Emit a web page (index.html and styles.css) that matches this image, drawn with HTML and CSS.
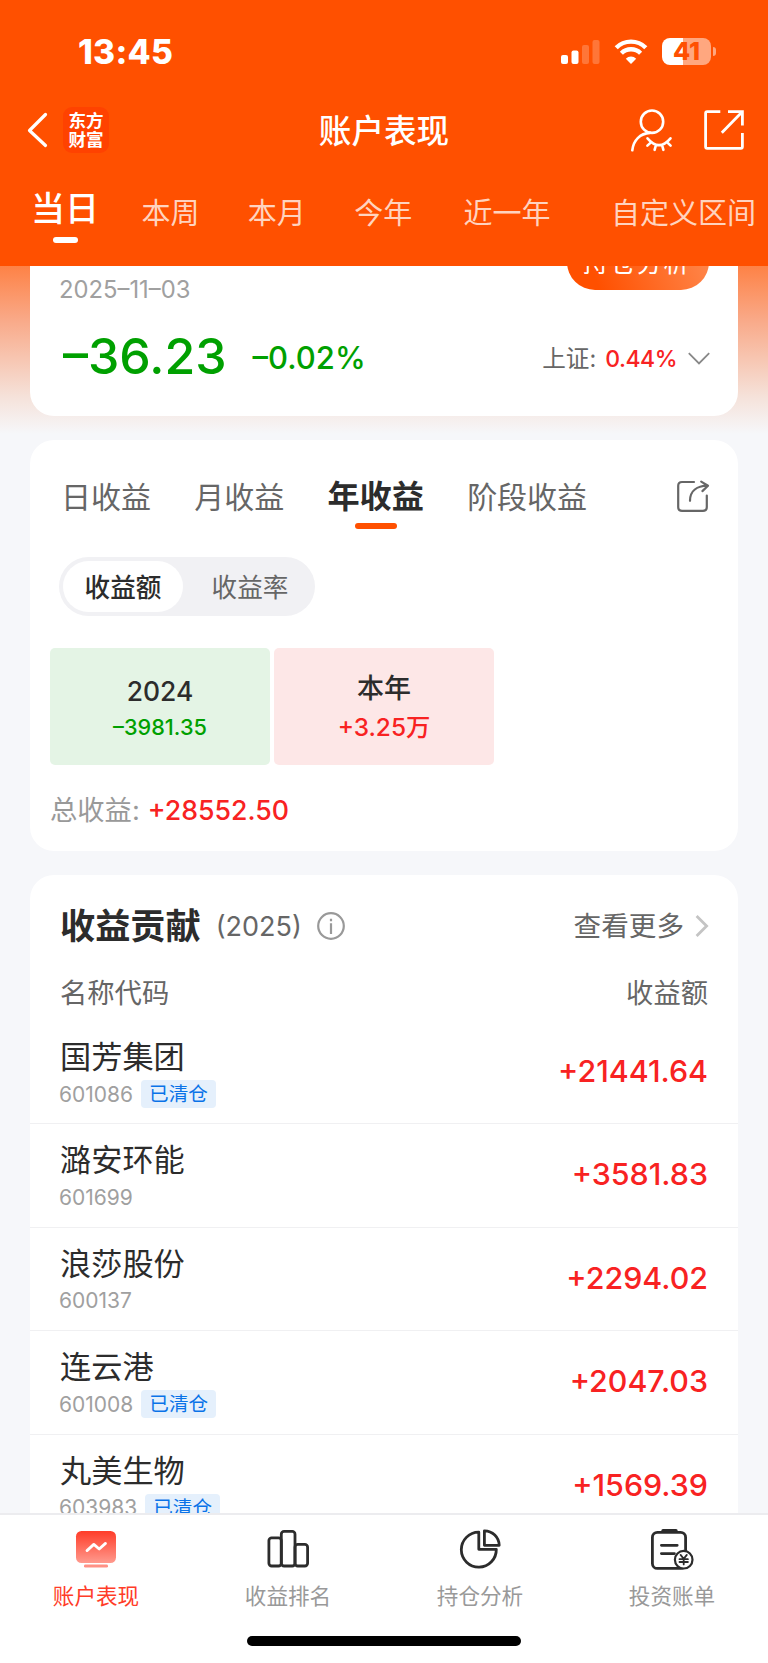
FILE: index.html
```html
<!DOCTYPE html>
<html lang="zh-CN">
<head>
  <meta charset="UTF-8">
  <meta name="viewport" content="width=device-width, initial-scale=1.0">
  <title>账户表现</title>
  <link rel="stylesheet" href="styles.css">
</head>
<body>
  <div class="app">
    <header class="header">
      <div class="status-bar">
        <span class="time">13:45</span>
        <div class="status-icons">
          <svg width="39" height="26" viewBox="0 0 39 26" fill="#fff">
            <rect x="0" y="16" width="7" height="9" rx="2"/>
            <rect x="10.5" y="11.5" width="7" height="13.5" rx="2"/>
            <rect x="21" y="6" width="7" height="19" rx="2" opacity=".22"/>
            <rect x="31.5" y="1" width="7" height="24" rx="2" opacity=".22"/>
          </svg>
          <svg class="wifi" width="34" height="26" viewBox="0 0 34 26" fill="none" stroke="#fff" stroke-width="4.4">
            <path d="M2.2 8.7a21 21 0 0 1 29.6 0"/>
            <path d="M7.4 14.2a13.6 13.6 0 0 1 19.2 0"/>
            <path d="M17 25l-5.2-5.3a7.4 7.4 0 0 1 10.4 0z" fill="#fff" stroke="none"/>
          </svg>
          <div class="battery"><span>41</span></div>
        </div>
      </div>

      <div class="nav-bar">
        <div class="nav-left">
          <svg width="22" height="36" viewBox="0 0 22 36" fill="none" stroke="#fff" stroke-width="3.2" stroke-linecap="round" stroke-linejoin="round">
            <path d="M18.5 2.5L2.5 18.5l16 15"/>
          </svg>
          <div class="logo">东方<br>财富</div>
        </div>
        <h1 class="nav-title">账户表现</h1>
        <div class="nav-right">
          <svg width="48" height="48" viewBox="0 0 48 48" fill="none" stroke="#fff" stroke-width="2.6" stroke-linecap="round">
            <circle cx="26" cy="15.7" r="11.2"/>
            <path d="M6.3 44.3C7.3 34.5 14 27.4 24 26.9"/>
            <path d="M21.5 32.3Q33 45.9 44.5 32.3M25 36.4l-3.6 3.2M30 38.8l-1.4 5M36 38.8l1.4 5M41.2 36.4l3.4 3.2"/>
          </svg>
          <svg width="48" height="48" viewBox="0 0 48 48" fill="none" stroke="#fff" stroke-width="2.8">
            <path d="M20.3 5.6H7.2Q5.6 5.6 5.6 7.2V40.8Q5.6 42.4 7.2 42.4H40.8Q42.4 42.4 42.4 40.8V27"/>
            <path d="M28 5.6H42.4V19.6M42 6L21.8 26.8"/>
          </svg>
        </div>
      </div>

      <nav class="range-tabs">
        <a class="active">当日</a>
        <a>本周</a>
        <a>本月</a>
        <a>今年</a>
        <a class="year">近一年</a>
        <a class="custom">自定义区间</a>
      </nav>
    </header>

    <main class="content">
      <section class="card summary">
        <div class="summary-top">
          <span class="date">2025–11–03</span>
          <a class="pill">持仓分析</a>
        </div>
        <div class="summary-values">
          <span class="profit">–36.23</span>
          <span class="rate">–0.02%</span>
          <div class="index">
            <span>上证:</span>
            <b>0.44%</b>
            <svg width="22" height="14" viewBox="0 0 22 14" fill="none" stroke="#888" stroke-width="1.8">
              <path d="M.8 1.2L11 11.4 21.2 1.2"/>
            </svg>
          </div>
        </div>
      </section>

      <section class="card period">
        <div class="period-tabs">
          <a>日收益</a>
          <a>月收益</a>
          <a class="active">年收益</a>
          <a>阶段收益</a>
          <svg width="40" height="40" viewBox="0 0 40 40" fill="none" stroke="#666" stroke-width="2.2" stroke-linecap="round" stroke-linejoin="round">
            <path d="M22 6H10Q6.2 6 6.2 9.8V31Q6.2 34.8 10 34.8H31Q34.8 34.8 34.8 31V19.5"/>
            <path d="M18 24.8C18 15 25 9.9 35.6 9.7M29.2 5.6L36 9.7l-5.6 5.4"/>
          </svg>
        </div>
        <div class="switch">
          <span class="on">收益额</span>
          <span>收益率</span>
        </div>
        <div class="years">
          <div class="year-box loss">
            <strong>2024</strong>
            <span>–3981.35</span>
          </div>
          <div class="year-box gain">
            <strong>本年</strong>
            <span>+3.25万</span>
          </div>
        </div>
        <div class="total"><span>总收益:</span><b>+28552.50</b></div>
      </section>

      <section class="card contrib">
        <div class="contrib-head">
          <h2>收益贡献</h2>
          <span class="contrib-year">(2025)</span>
          <svg width="28" height="28" viewBox="0 0 28 28" fill="none" stroke="#999" stroke-width="2.2">
            <circle cx="14" cy="14" r="12.8"/>
            <path d="M14 11.2V22M14 6.8v2.4"/>
          </svg>
          <a class="more">查看更多
            <svg width="14" height="22" viewBox="0 0 14 22" fill="none" stroke="#c4c4c4" stroke-width="2.8">
              <path d="M1.6 1l10 10-10 10"/>
            </svg>
          </a>
        </div>
        <div class="contrib-cols"><span>名称代码</span><span>收益额</span></div>

        <div class="stock">
          <div>
            <div class="name">国芳集团</div>
            <div class="code">601086<em>已清仓</em></div>
          </div>
          <span class="amount">+21441.64</span>
        </div>
        <div class="stock">
          <div>
            <div class="name">潞安环能</div>
            <div class="code">601699</div>
          </div>
          <span class="amount">+3581.83</span>
        </div>
        <div class="stock">
          <div>
            <div class="name">浪莎股份</div>
            <div class="code">600137</div>
          </div>
          <span class="amount">+2294.02</span>
        </div>
        <div class="stock">
          <div>
            <div class="name">连云港</div>
            <div class="code">601008<em>已清仓</em></div>
          </div>
          <span class="amount">+2047.03</span>
        </div>
        <div class="stock">
          <div>
            <div class="name">丸美生物</div>
            <div class="code">603983<em>已清仓</em></div>
          </div>
          <span class="amount">+1569.39</span>
        </div>
      </section>
    </main>

    <footer class="footer">
      <div class="tab-bar">
        <a class="active">
          <svg width="48" height="48" viewBox="0 0 48 48">
            <defs>
              <linearGradient id="screen" x1="0" y1="0" x2="0" y2="1">
                <stop offset="0" stop-color="#ff3c28"/>
                <stop offset="1" stop-color="#ff9a8e"/>
              </linearGradient>
            </defs>
            <rect x="4" y="6" width="40" height="32" rx="5.5" fill="url(#screen)"/>
            <rect x="12" y="39.6" width="24" height="3" rx="1.4" fill="#ff9185"/>
            <path d="M15 25.6l6.8-6.2 5.4 4.6 6.3-5.6" fill="none" stroke="#fff" stroke-width="2.8" stroke-linecap="round" stroke-linejoin="round"/>
          </svg>
          账户表现
        </a>
        <a>
          <svg width="48" height="48" viewBox="0 0 48 48" fill="none" stroke="#2c2c2c" stroke-width="2.8">
            <rect x="4.9" y="12.8" width="12.4" height="28.2" rx="2.8"/>
            <rect x="17.3" y="6.4" width="13.7" height="34.6" rx="2.8"/>
            <rect x="31" y="19.4" width="12.6" height="21.6" rx="2.8"/>
          </svg>
          收益排名
        </a>
        <a>
          <svg width="48" height="48" viewBox="0 0 48 48" fill="none" stroke="#2c2c2c" stroke-width="2.8" stroke-linejoin="round">
            <path d="M22.8 7.2V24.3H40.3A17.5 17.5 0 1 1 22.8 7.2z"/>
            <path d="M28.4 5.8V20.3H43.2A14.7 14.7 0 0 0 28.4 5.8z"/>
          </svg>
          持仓分析
        </a>
        <a>
          <svg width="48" height="48" viewBox="0 0 48 48" fill="none" stroke="#2c2c2c" stroke-width="2.8" stroke-linecap="round">
            <rect x="4.4" y="7.4" width="33.2" height="36" rx="5"/>
            <path d="M15 5.8h13" stroke-width="3.4"/>
            <path d="M13.4 20.3h15.8M13.4 28.6h13"/>
            <circle cx="35.7" cy="34.7" r="8.8" fill="#fff" stroke-width="2.2"/>
            <path d="M32.6 29.9l3.1 4 3.1-4M35.7 34v5.4M31.5 34.2h8.4M31.5 37h8.4" stroke-width="1.8"/>
          </svg>
          投资账单
        </a>
      </div>
      <div class="home-indicator"></div>
    </footer>
  </div>
</body>
</html>
```

FILE: styles.css
```css
* {
  box-sizing: border-box;
}

body {
  margin: 0;
  font-family: Inter, "Noto Sans CJK SC", sans-serif;
  color: #2c2c2c;
  background-color: #f6f7fa;
}

h1, h2 {
  margin: 0;
}

b, em {
  font-style: normal;
  font-weight: 500;
}

svg {
  display: block;
  flex-shrink: 0;
}

.app {
  display: flex;
  flex-direction: column;
  width: 768px;
  height: 1663px;
  overflow: hidden;
}

/* header */
.header {
  flex: none;
  height: 266px;
  background-color: #ff5000;
  color: #fff;
}

.status-bar {
  display: flex;
  justify-content: space-between;
  align-items: center;
  height: 103px;
  padding: 0 52px 0 78px;
}

.time {
  font-size: 33.6px;
  font-weight: 800;
  letter-spacing: .3px;
}

.status-icons {
  display: flex;
  align-items: center;
}

.wifi {
  margin: 0 14px;
}

.battery {
  position: relative;
  width: 49px;
  height: 27px;
  margin-right: 5px;
  border-radius: 8px;
  background: linear-gradient(90deg, #fff 42%, #ffa77f 42%);
  color: #ff5000;
  font-size: 25px;
  font-weight: 800;
  line-height: 27px;
  text-align: center;
}

.battery::after {
  content: "";
  position: absolute;
  right: -5px;
  top: 9px;
  width: 3px;
  height: 9px;
  border-radius: 0 4px 4px 0;
  background-color: #ffa77f;
}

.nav-bar {
  display: grid;
  grid-template-columns: 1fr auto 1fr;
  align-items: center;
  height: 54px;
  padding: 0 20px;
}

.nav-left {
  display: flex;
  align-items: center;
  gap: 14px;
  padding-left: 7px;
}

.logo {
  width: 46px;
  height: 46px;
  padding-top: 4px;
  border-radius: 9px;
  background-color: #ff4200;
  font-size: 17.6px;
  font-weight: 700;
  line-height: 19.4px;
  text-align: center;
}

.nav-title {
  padding-top: 2px;
  font-size: 32.6px;
  font-weight: 500;
  line-height: 52px;
}

.nav-right {
  display: flex;
  justify-content: flex-end;
  gap: 26px;
}

.range-tabs {
  display: flex;
  height: 109px;
  padding-left: 31px;
  gap: 48.4px;
  font-size: 29px;
  line-height: 114px;
  white-space: nowrap;
}

.range-tabs a {
  color: #ffd3bf;
}

.range-tabs .active {
  position: relative;
  margin-right: -6px;
  color: #fff;
  font-size: 34px;
  font-weight: 500;
  line-height: 104px;
}

.range-tabs .active::after {
  content: "";
  position: absolute;
  left: 22px;
  top: 80px;
  width: 25px;
  height: 6px;
  border-radius: 3px;
  background-color: #fff;
}

.range-tabs .year {
  margin-left: 3px;
}

.range-tabs .custom {
  margin-left: 12px;
}

/* scroll area */
.content {
  flex: 1;
  min-height: 0;
  overflow: hidden;
  padding: 0 30px;
  background: linear-gradient(#fe8246, #f9a988 32%, #f5e2da 78%, #f6f7fa) no-repeat 0 0 / 100% 168px #f6f7fa;
}

.card {
  margin-bottom: 24px;
  border-radius: 24px;
  background-color: #fff;
}

/* the card is scrolled partly under the header */
.summary {
  height: 210px;
  margin-top: -60px;
  padding: 28px 29px 0 30px;
}

.summary-top {
  display: flex;
  justify-content: space-between;
  height: 90px;
}

.date {
  margin-left: -1px;
  color: #a0a0a0;
  font-size: 23.8px;
  line-height: 111px;
}

.pill {
  width: 142px;
  height: 56px;
  padding-right: 3px;
  border-radius: 28px;
  background: linear-gradient(70deg, #ff5000 20%, #ff8a50);
  color: #fff;
  font-size: 26px;
  letter-spacing: 1px;
  line-height: 57px;
  text-align: center;
}

.summary-values {
  display: flex;
  align-items: center;
  height: 64px;
  padding-left: 3px;
  color: #00a000;
}

.profit {
  font-size: 50px;
  font-weight: 500;
}

.rate {
  margin-left: 26px;
  padding-top: 3px;
  font-size: 31px;
  font-weight: 500;
}

.index {
  display: flex;
  align-items: center;
  margin-left: auto;
  padding-top: 6px;
  color: #666;
  font-size: 23.6px;
}

.index span {
  line-height: 30px;
}

.index b {
  margin: 0 11px 0 9px;
  color: #f82222;
  font-size: 23px;
  letter-spacing: -.5px;
}

.index svg {
  margin-right: -1px;
}

.period {
  height: 411px;
  padding: 0 26px 0 20px;
}

.period-tabs {
  display: flex;
  height: 117px;
  padding-left: 11px;
  gap: 43.2px;
  color: #666;
  font-size: 30px;
  line-height: 114px;
}

.period-tabs .active {
  position: relative;
  color: #2c2c2c;
  font-size: 32.2px;
  font-weight: 700;
}

.period-tabs .active::after {
  content: "";
  position: absolute;
  left: 28px;
  top: 83px;
  width: 42px;
  height: 6px;
  border-radius: 3px;
  background-color: #ff5000;
}

.period-tabs svg {
  margin: 36px 0 0 auto;
}

.switch {
  display: flex;
  width: 256px;
  height: 59px;
  margin-left: 9px;
  padding: 4px;
  border-radius: 30px;
  background-color: #f1f1f4;
  color: #666;
  font-size: 25.6px;
  line-height: 53px;
  text-align: center;
}

.switch span {
  flex: 1;
  padding-left: 6px;
}

.switch .on {
  flex: none;
  width: 120px;
  padding: 0;
  border-radius: 26px;
  background-color: #fff;
  color: #2c2c2c;
  font-weight: 500;
}

.years {
  display: flex;
  gap: 4px;
  margin-top: 32px;
}

.year-box {
  display: flex;
  flex-direction: column;
  align-items: center;
  width: 220px;
  height: 117px;
  padding-top: 23px;
  border-radius: 5px;
}

.year-box strong {
  font-size: 26.4px;
  font-weight: 500;
  line-height: 40px;
}

.loss {
  background-color: #e4f4e5;
  color: #00a000;
}

.gain {
  background-color: #fde7e7;
  color: #f82222;
}

.year-box strong {
  color: #2c2c2c;
}

.year-box span {
  font-size: 21.7px;
  font-weight: 500;
  line-height: 32px;
}

.gain strong {
  margin-top: -2px;
  font-size: 27px;
}

.gain span {
  margin-top: 2px;
  font-size: 24.4px;
}

.total {
  margin-top: 25px;
  color: #999;
  font-size: 27.3px;
  line-height: 40px;
}

.total b {
  margin-left: 8px;
  color: #f82222;
  font-size: 26.7px;
}

.contrib-head {
  display: flex;
  align-items: center;
  height: 102px;
  padding: 0 29px 0 30px;
}

.contrib-head h2 {
  font-size: 35.2px;
  font-weight: 700;
  line-height: 50px;
}

.contrib-year {
  margin: 0 15px;
  color: #666;
  font-size: 27px;
}

.more {
  display: flex;
  align-items: center;
  gap: 11px;
  margin-left: auto;
  color: #666;
  font-size: 27.6px;
  line-height: 30px;
}

.contrib-cols {
  display: flex;
  justify-content: space-between;
  height: 44px;
  padding: 0 30px;
  color: #666;
  font-size: 27.3px;
  line-height: 33px;
}

.stock {
  display: flex;
  justify-content: space-between;
  height: 103.4px;
  padding: 16px 30px 0;
  border-bottom: 1.5px solid #f0f0f2;
}

.name {
  font-size: 31.2px;
  line-height: 40px;
}

.code {
  display: flex;
  align-items: center;
  height: 28px;
  margin: 3px 0 0 -1px;
  color: #a0a0a0;
  font-size: 21px;
}

.code em {
  height: 28px;
  margin-left: 8px;
  padding: 0 8px;
  border-radius: 4px;
  background-color: #e5f0fc;
  color: #0a73e8;
  font-size: 19.6px;
  font-weight: 400;
  line-height: 28px;
}

.amount {
  color: #f82222;
  font-size: 30.4px;
  font-weight: 500;
  line-height: 69px;
}

/* bottom bar */
.footer {
  flex: none;
  height: 150px;
  border-top: 2px solid #ececef;
  background-color: #fff;
}

.tab-bar {
  display: grid;
  grid-template-columns: repeat(4, 1fr);
  height: 121px;
  padding-top: 10px;
}

.tab-bar a {
  display: flex;
  flex-direction: column;
  align-items: center;
  color: #999;
  font-size: 21.6px;
  line-height: 47px;
}

.tab-bar .active {
  color: #ff3c28;
}

.home-indicator {
  width: 274px;
  height: 10px;
  margin: 0 auto;
  border-radius: 5px;
  background-color: #000;
}
```
